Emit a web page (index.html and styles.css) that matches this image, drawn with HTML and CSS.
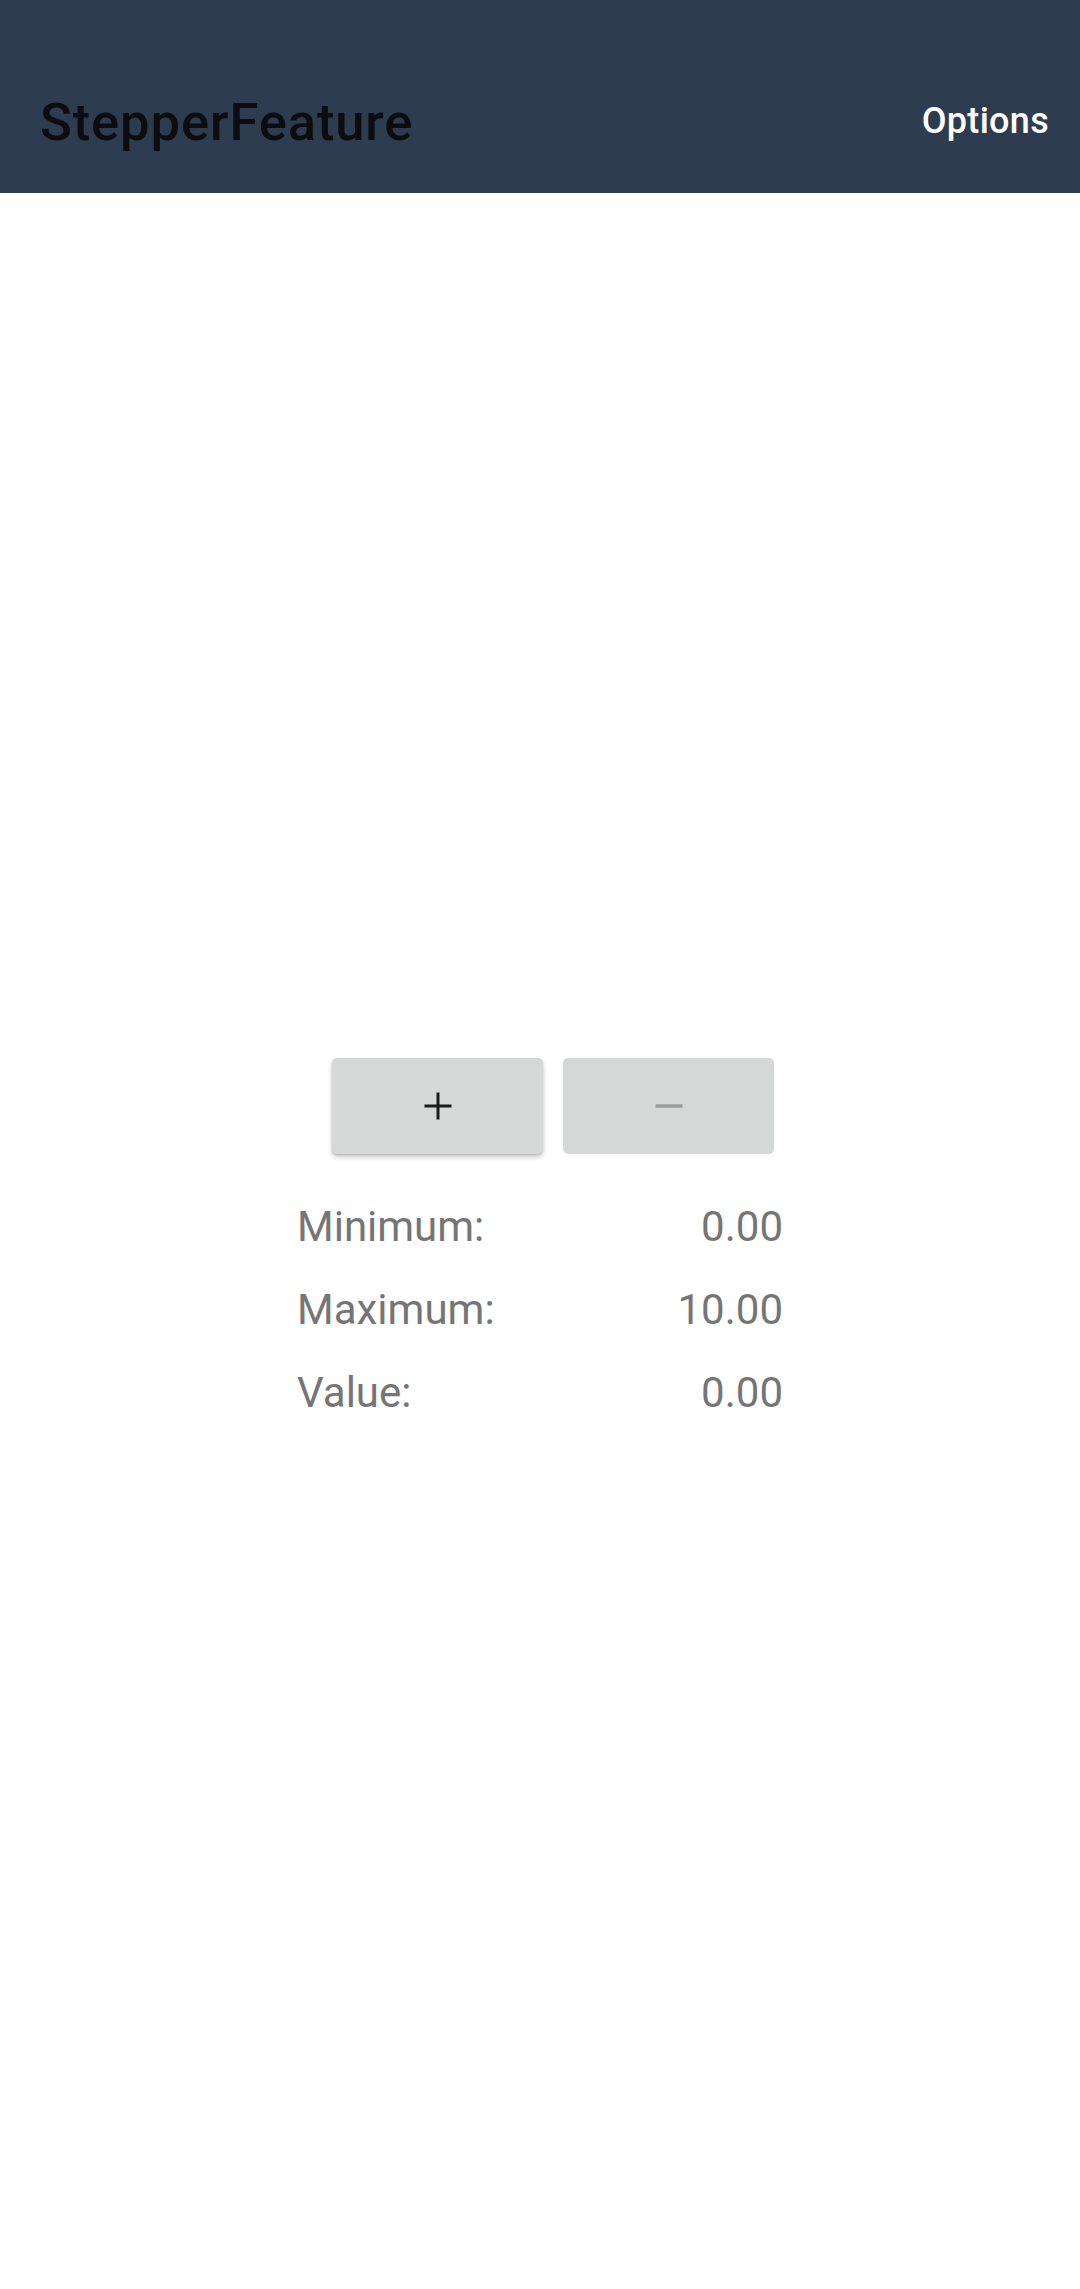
FILE: index.html
```html
<!DOCTYPE html>
<html>
<head>
<meta charset="utf-8">
<link rel="stylesheet" href="styles.css">
</head>
<body>
<header class="toolbar">
  <div class="title">StepperFeature</div>
  <div class="options">Options</div>
</header>
<main class="content">
  <div class="stack">
    <div class="buttons">
      <div class="btn btn-plus">
        <svg width="28" height="28" viewBox="0 0 28 28"><path d="M14 0.5V27.5M0.5 14H27.5" stroke="#1c1c1c" stroke-width="3" fill="none"/></svg>
      </div>
      <div class="btn btn-minus">
        <svg width="28" height="28" viewBox="0 0 28 28"><path d="M0.5 14H27.5" stroke="#9b9b9b" stroke-width="3.4" fill="none"/></svg>
      </div>
    </div>
    <div class="grid">
      <div class="label">Minimum:</div><div class="value">0.00</div>
      <div class="label">Maximum:</div><div class="value">10.00</div>
      <div class="label">Value:</div><div class="value">0.00</div>
    </div>
  </div>
</main>
</body>
</html>
```

FILE: styles.css
```css
html, body {
  margin: 0;
  padding: 0;
  background: #ffffff;
  font-family: Roboto, "Noto Sans", sans-serif;
}
.toolbar {
  height: 193px;
  background: #2d3c4f;
  display: flex;
  justify-content: space-between;
  align-items: flex-start;
  padding: 0 31px 0 40px;
  box-sizing: border-box;
}
.title {
  margin-top: 92px;
  font-size: 52.5px;
  line-height: 60px;
  font-weight: 500;
  letter-spacing: 0.9px;
  color: #0b0d10;
}
.options {
  margin-top: 99px;
  font-size: 36px;
  line-height: 44px;
  font-weight: 500;
  letter-spacing: 0.3px;
  color: #ffffff;
}
.content {
  height: 2096px;
  display: flex;
  justify-content: center;
  align-items: flex-start;
}
.stack {
  margin-top: 865px;
  width: 486px;
  display: flex;
  flex-direction: column;
}
.buttons {
  display: flex;
  gap: 20px;
  padding-left: 35px;
}
.btn {
  width: 211px;
  height: 96px;
  background: #d6d7d7;
  border-radius: 5px;
  display: flex;
  align-items: center;
  justify-content: center;
}
.btn svg {
  display: block;
}
.btn-plus {
  box-shadow: 0 3px 5px rgba(0, 0, 0, 0.22), 0 1px 2px rgba(0, 0, 0, 0.12);
}
.grid {
  margin-top: 31px;
  display: grid;
  grid-template-columns: 1fr auto;
  font-size: 42px;
  line-height: 83px;
  color: #757575;
  padding-right: 0;
}
.value {
  text-align: right;
}
```
